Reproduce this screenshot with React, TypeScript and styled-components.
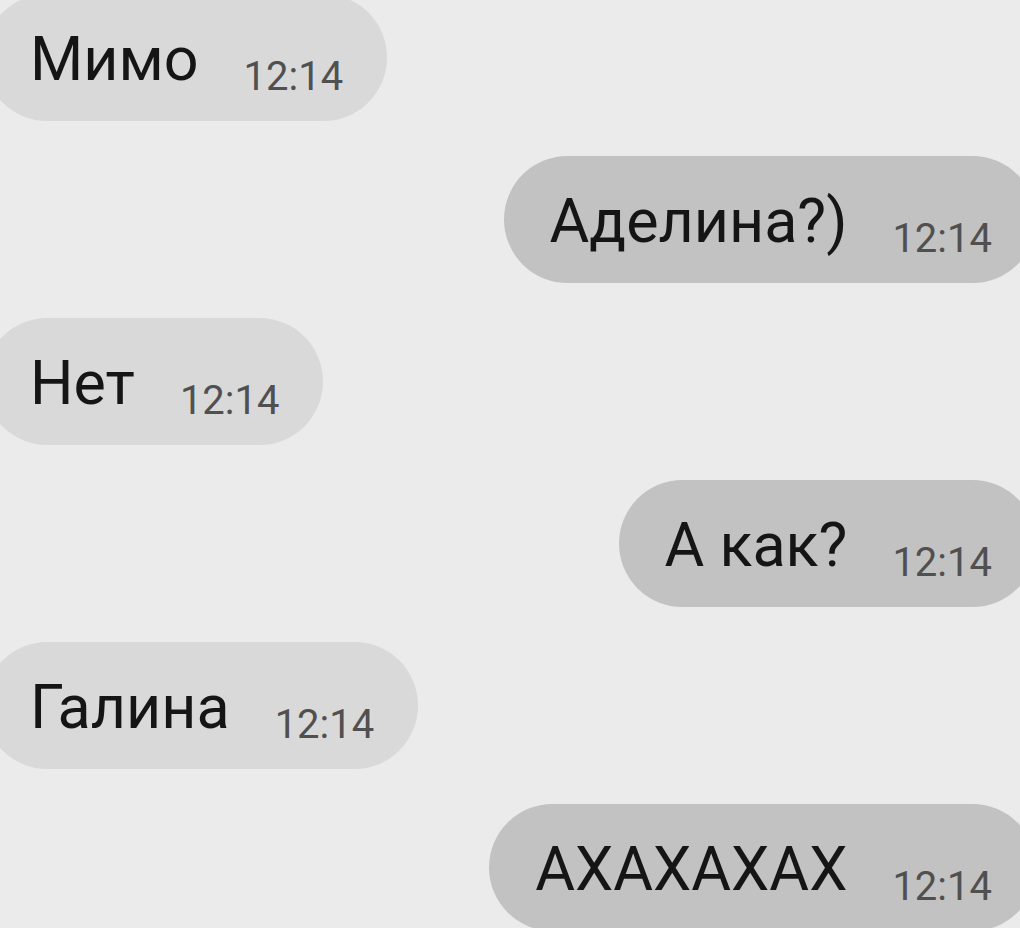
import React from "react";
import { styled, createGlobalStyle } from "styled-components";

interface Message {
	id: number;
	text: string;
	time: string;
	outgoing: boolean;
}

const messages: Message[] = [
	{ id: 1, text: "Мимо", time: "12:14", outgoing: false },
	{ id: 2, text: "Аделина?)", time: "12:14", outgoing: true },
	{ id: 3, text: "Нет", time: "12:14", outgoing: false },
	{ id: 4, text: "А как?", time: "12:14", outgoing: true },
	{ id: 5, text: "Галина", time: "12:14", outgoing: false },
	{ id: 6, text: "АХАХАХАХ", time: "12:14", outgoing: true },
];

export default function App() {
	return (
		<>
			<GlobalStyle />
			<Chat>
				{messages.map((message) => (
					<Row key={message.id} $outgoing={message.outgoing}>
						<Bubble $outgoing={message.outgoing}>
							<Text>{message.text}</Text>
							<Time>{message.time}</Time>
						</Bubble>
					</Row>
				))}
			</Chat>
		</>
	);
}

const GlobalStyle = createGlobalStyle`
	html, body {
		margin: 0;
		padding: 0;
		background: #ebebeb;
		overflow: hidden;
	}

	body {
		font-family: Roboto, "Liberation Sans", sans-serif;
	}
`;

const Chat = styled.div`
	display: flex;
	flex-direction: column;
	gap: 35px;
	margin: -6px -16px 0;
`;

const Row = styled.div<{ $outgoing: boolean }>`
	display: flex;
	justify-content: ${({ $outgoing }) => ($outgoing ? "flex-end" : "flex-start")};
`;

const Bubble = styled.div<{ $outgoing: boolean }>`
	box-sizing: border-box;
	height: 127px;
	padding: 35px 44px 0 46px;
	border-radius: 64px;
	background: ${({ $outgoing }) => ($outgoing ? "#c2c2c2" : "#d9d9d9")};
	white-space: nowrap;
	line-height: 60px;
	font-size: 61px;
`;

const Text = styled.span`
	color: #151515;
	font-size: 61px;
`;

const Time = styled.span`
	margin-left: 45px;
	color: #505050;
	font-size: 40px;
	line-height: 1;
	vertical-align: -10px;
`;
